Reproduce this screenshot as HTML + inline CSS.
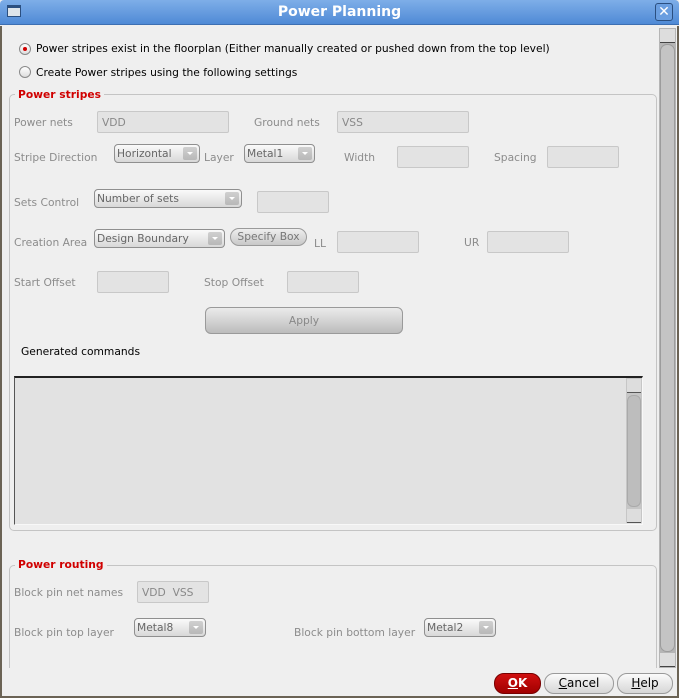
<!DOCTYPE html>
<html><head><meta charset="utf-8"><style>
*{box-sizing:border-box;margin:0;padding:0}
html,body{width:679px;height:698px;overflow:hidden}
body{background:#efefef;font-family:"DejaVu Sans","Liberation Sans",sans-serif;font-size:10.7px;position:relative;color:#000}
.a{position:absolute;white-space:nowrap}
.lbl{color:#8c8c8c}
.tb{position:absolute;height:22px;background:#e3e3e3;border:1px solid #c8c8c8;border-radius:2px;color:#888;padding:4px 4px}
.cb{position:absolute;height:19px;border:1px solid #8f8f8f;border-radius:4px;background:linear-gradient(#fafafa,#d8d8d8);color:#666;padding:2px 2px}
.cb i{position:absolute;right:2px;top:2px;width:14px;height:13px;background:linear-gradient(#d0d0d0,#b8b8b8);border-radius:2px}
.cb i:after{content:"";position:absolute;left:4px;top:5px;border-left:3px solid transparent;border-right:3px solid transparent;border-top:3px solid #fff}
.fs{position:absolute;border:1px solid #c4c4c4;border-radius:5px}
.leg{position:absolute;background:#efefef;color:#d00000;font-weight:bold;padding:0 3px}
.btn{position:absolute;height:21px;border:1px solid #9a9a9a;border-radius:10px;background:linear-gradient(#fbfbfb,#d6d6d6);text-align:center;line-height:19px;font-size:12px}
.rad{position:absolute;width:12px;height:12px;border-radius:50%;border:1px solid #8a8a8a;background:linear-gradient(#fff,#ddd)}
</style></head><body>
<div class="a" style="left:0;top:0;width:679px;height:25px;background:linear-gradient(#7eaee8,#4f8ad6);border-bottom:1px solid #3d6fb2;border-radius:4px 4px 0 0"></div>
<div class="a" style="left:7px;top:5px;width:14px;height:12px;border:1px solid #2b4f80;background:#dde4ea;border-top:3px solid #2b4f80"></div>
<div class="a" style="left:0;top:4px;width:679px;text-align:center;color:#fff;font-weight:bold;font-size:14px">Power Planning</div>
<div class="a" style="left:655px;top:3px;width:18px;height:18px;border:1px solid #2b4f80;border-radius:3px;background:#6a9ee0;color:#fff;text-align:center;font-weight:bold;font-size:14px;line-height:16px">✕</div>

<div class="rad" style="left:19px;top:43px"><div style="position:absolute;left:3px;top:3px;width:4px;height:4px;border-radius:50%;background:#d00000"></div></div>
<div class="a" style="left:36px;top:42px">Power stripes exist in the floorplan (Either manually created or pushed down from the top level)</div>
<div class="rad" style="left:19px;top:66px"></div>
<div class="a" style="left:36px;top:66px">Create Power stripes using the following settings</div>

<div class="fs" style="left:9px;top:94px;width:648px;height:437px"></div>
<div class="leg" style="left:15px;top:88px">Power stripes</div>
<div class="a lbl" style="left:14px;top:116px">Power nets</div>
<div class="tb" style="left:97px;top:111px;width:132px">VDD</div>
<div class="a lbl" style="left:254px;top:116px">Ground nets</div>
<div class="tb" style="left:337px;top:111px;width:132px">VSS</div>
<div class="a lbl" style="left:14px;top:151px">Stripe Direction</div>
<div class="cb" style="left:114px;top:144px;width:86px">Horizontal<i></i></div>
<div class="a lbl" style="left:204px;top:151px">Layer</div>
<div class="cb" style="left:244px;top:144px;width:71px">Metal1<i></i></div>
<div class="a lbl" style="left:344px;top:151px">Width</div>
<div class="tb" style="left:397px;top:146px;width:72px"></div>
<div class="a lbl" style="left:494px;top:151px">Spacing</div>
<div class="tb" style="left:547px;top:146px;width:72px"></div>
<div class="a lbl" style="left:14px;top:196px">Sets Control</div>
<div class="cb" style="left:94px;top:189px;width:148px">Number of sets<i></i></div>
<div class="tb" style="left:257px;top:191px;width:72px"></div>
<div class="a lbl" style="left:14px;top:236px">Creation Area</div>
<div class="cb" style="left:94px;top:229px;width:131px">Design Boundary<i></i></div>
<div class="btn" style="left:230px;top:228px;width:77px;height:18px;line-height:15px;font-size:10.7px;color:#777;background:linear-gradient(#eee,#c8c8c8)">Specify Box</div>
<div class="a lbl" style="left:314px;top:237px">LL</div>
<div class="tb" style="left:337px;top:231px;width:82px"></div>
<div class="a lbl" style="left:464px;top:236px">UR</div>
<div class="tb" style="left:487px;top:231px;width:82px"></div>
<div class="a lbl" style="left:14px;top:276px">Start Offset</div>
<div class="tb" style="left:97px;top:271px;width:72px"></div>
<div class="a lbl" style="left:204px;top:276px">Stop Offset</div>
<div class="tb" style="left:287px;top:271px;width:72px"></div>
<div class="btn" style="left:205px;top:307px;width:198px;height:27px;border-radius:6px;line-height:25px;color:#888;font-size:10.7px;background:linear-gradient(#ebebeb,#bcbcbc)">Apply</div>
<div class="a" style="left:21px;top:345px">Generated commands</div>
<div class="a" style="left:14px;top:376px;width:629px;height:149px;background:#e2e2e2;border-top:2px solid #222;border-left:1px solid #555;border-right:1px solid #f8f8f8;border-bottom:1px solid #f8f8f8"></div>
<div class="a" style="left:626px;top:378px;width:16px;height:145px;background:#c6c6c6"></div>
<div class="a" style="left:627px;top:379px;width:14px;height:14px;background:#ddd;border-bottom:1px solid #555"></div>
<div class="a" style="left:627px;top:395px;width:14px;height:112px;background:#bdbdbd;border:1px solid #aaa;border-radius:6px"></div>
<div class="a" style="left:627px;top:509px;width:14px;height:14px;background:#ddd;border-bottom:1px solid #555"></div>

<div class="fs" style="left:9px;top:565px;width:648px;height:125px"></div>
<div class="leg" style="left:15px;top:558px">Power routing</div>
<div class="a" style="left:3px;top:668px;width:656px;height:28px;background:#efefef"></div>
<div class="a lbl" style="left:14px;top:586px">Block pin net names</div>
<div class="tb" style="left:137px;top:581px;width:72px">VDD&nbsp;&nbsp;VSS</div>
<div class="a lbl" style="left:14px;top:626px">Block pin top layer</div>
<div class="cb" style="left:134px;top:618px;width:72px">Metal8<i></i></div>
<div class="a lbl" style="left:294px;top:626px">Block pin bottom layer</div>
<div class="cb" style="left:424px;top:618px;width:72px">Metal2<i></i></div>

<div class="a" style="left:659px;top:28px;width:17px;height:640px;background:#b5b5b5"></div>
<div class="a" style="left:660px;top:29px;width:15px;height:14px;background:#ddd;border-bottom:1px solid #444"></div>
<div class="a" style="left:660px;top:44px;width:15px;height:608px;background:#c4c4c4;border:1px solid #9c9c9c;border-radius:7px"></div>
<div class="a" style="left:660px;top:653px;width:15px;height:14px;background:#ddd;border-bottom:1px solid #444"></div>

<div class="btn" style="left:494px;top:673px;width:47px;background:linear-gradient(#d01010,#a00000);border-color:#700;color:#fff;font-weight:bold"><u>O</u>K</div>
<div class="btn" style="left:544px;top:673px;width:70px"><u>C</u>ancel</div>
<div class="btn" style="left:617px;top:673px;width:56px"><u>H</u>elp</div>

<div class="a" style="left:0;top:26px;width:2px;height:672px;background:#6b6355"></div>
<div class="a" style="left:677px;top:26px;width:2px;height:672px;background:#6b6355"></div>
<div class="a" style="left:0;top:696px;width:679px;height:2px;background:#6b6355"></div>
</body></html>
